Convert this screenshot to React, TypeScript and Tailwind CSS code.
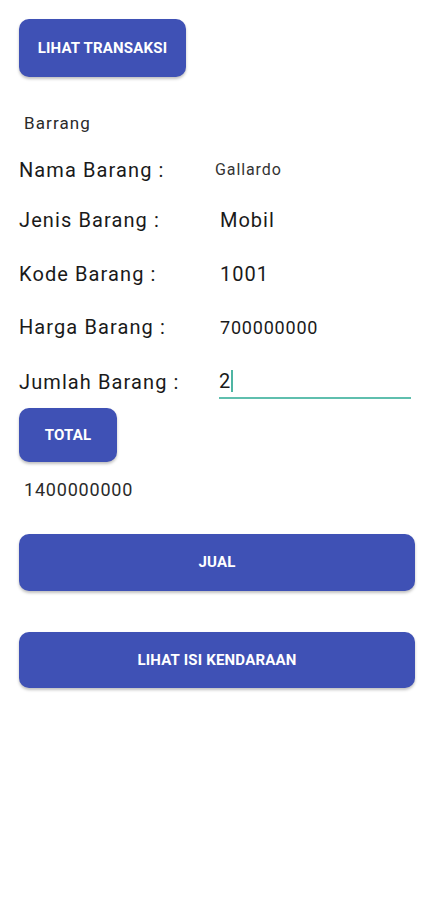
import React from 'react';

const font = { fontFamily: 'Roboto, "Liberation Sans", sans-serif' };

const Field = ({ label, value, valueClass }: { label: string; value: string; valueClass: string }) => (
  <div className="flex items-center h-[28px] pl-[19px]">
    <span className="w-[200px] shrink-0 text-[20px] tracking-[1.1px] text-[#1a1a1a]">{label}</span>
    <span className={valueClass}>{value}</span>
  </div>
);

export default function App() {
  return (
    <div className="min-h-[900px] w-full bg-white flex flex-col" style={font}>
      <button className="ml-[19px] mt-[19px] w-[167px] h-[58px] rounded-[10px] bg-[#3f51b5] text-white text-[15px] font-bold tracking-[0.2px] shadow-[0_2px_3px_rgba(0,0,0,0.25)]">
        LIHAT TRANSAKSI
      </button>

      <div className="mt-[35px] h-[24px] pl-[24px] flex items-center text-[17px] tracking-[1.1px] text-[#2a2a2a]">
        Barrang
      </div>

      <div className="mt-[20px]">
        <Field label="Nama Barang :" value="Gallardo" valueClass="-ml-[4px] text-[16px] tracking-[0.9px] text-[#333]" />
      </div>
      <div className="mt-[22px]">
        <Field label="Jenis Barang :" value="Mobil" valueClass="ml-[1px] text-[20px] tracking-[1px] text-[#1a1a1a]" />
      </div>
      <div className="mt-[26px]">
        <Field label="Kode Barang :" value="1001" valueClass="ml-[1px] text-[20px] tracking-[1px] text-[#1a1a1a]" />
      </div>
      <div className="mt-[25px]">
        <Field label="Harga Barang :" value="700000000" valueClass="ml-[1px] text-[18px] tracking-[0.8px] text-[#1a1a1a]" />
      </div>

      <div className="mt-[23px] flex items-center h-[35px] pl-[19px]">
        <span className="w-[200px] shrink-0 text-[20px] tracking-[1.1px] text-[#1a1a1a]">Jumlah Barang :</span>
        <div className="w-[192px] h-full border-b-2 border-[#5fbfae] flex items-center">
          <span className="text-[20px] text-[#1a1a1a]">2</span>
          <span className="ml-[1px] w-[2px] h-[22px] bg-[#4fb5a3]" />
        </div>
      </div>

      <button className="ml-[19px] mt-[9px] w-[98px] h-[54px] rounded-[10px] bg-[#3f51b5] text-white text-[15px] font-bold tracking-[0.2px] shadow-[0_2px_3px_rgba(0,0,0,0.25)]">
        TOTAL
      </button>

      <div className="mt-[15px] h-[24px] pl-[24px] flex items-center text-[18px] tracking-[0.8px] text-[#2a2a2a]">
        1400000000
      </div>

      <button className="ml-[19px] mt-[33px] w-[396px] h-[57px] rounded-[10px] bg-[#3f51b5] text-white text-[15px] font-bold tracking-[0.2px] shadow-[0_2px_3px_rgba(0,0,0,0.25)]">
        JUAL
      </button>

      <button className="ml-[19px] mt-[41px] w-[396px] h-[56px] rounded-[10px] bg-[#3f51b5] text-white text-[15px] font-bold tracking-[0.2px] shadow-[0_2px_3px_rgba(0,0,0,0.25)]">
        LIHAT ISI KENDARAAN
      </button>
    </div>
  );
}
